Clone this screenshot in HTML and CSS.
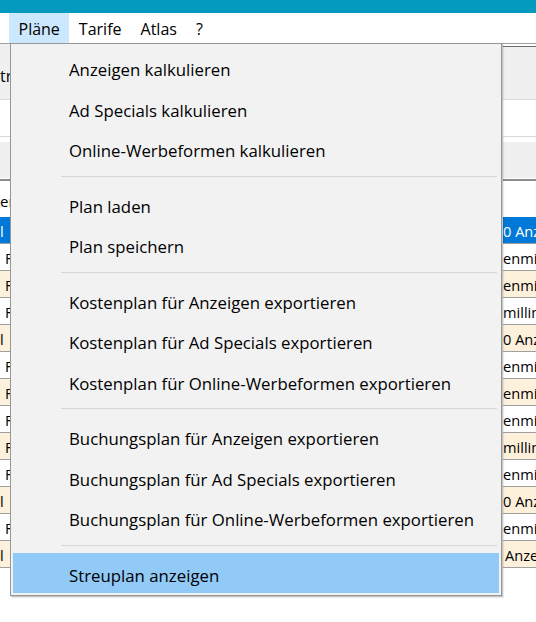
FILE: index.html
```html
<!DOCTYPE html>
<html lang="de">
<head>
<meta charset="utf-8">
<title>Pläne</title>
<link rel="stylesheet" href="styles.css">
</head>
<body>
<div class="app">
  <div class="titlebar"></div>
  <nav class="menubar">
    <span class="mi active">Pläne</span>
    <span class="mi">Tarife</span>
    <span class="mi">Atlas</span>
    <span class="mi">?</span>
  </nav>
  <div class="toolbar">
    <div class="tb-left"><span class="tb-label">tr</span></div>
    <div class="tb-right"></div>
  </div>
  <div class="filter"></div>
  <div class="colhead"><div class="colhead-fill"></div></div>
  <div class="label">er</div>
  <div class="rows">
    <div class="row sel"><span class="c-left flush">l</span><span class="c-right">0 Anzeigen</span></div>
    <div class="row"><span class="c-left">F</span><span class="c-right">enmillimeter</span></div>
    <div class="row cream"><span class="c-left">F</span><span class="c-right">enmillimeter</span></div>
    <div class="row"><span class="c-left">F</span><span class="c-right">millimeter</span></div>
    <div class="row cream"><span class="c-left flush">l</span><span class="c-right">0 Anzeigen</span></div>
    <div class="row"><span class="c-left">F</span><span class="c-right">enmillimeter</span></div>
    <div class="row cream"><span class="c-left">F</span><span class="c-right">enmillimeter</span></div>
    <div class="row"><span class="c-left">F</span><span class="c-right">enmillimeter</span></div>
    <div class="row cream"><span class="c-left">F</span><span class="c-right">millimeter</span></div>
    <div class="row"><span class="c-left">F</span><span class="c-right">enmillimeter</span></div>
    <div class="row cream"><span class="c-left flush">l</span><span class="c-right">0 Anzeigen</span></div>
    <div class="row"><span class="c-left">F</span><span class="c-right">enmillimeter</span></div>
    <div class="row cream"><span class="c-left flush">l</span><span class="c-right gap">Anzeigen</span></div>
  </div>

  <div class="menu">
    <div class="item">Anzeigen kalkulieren</div>
    <div class="item">Ad Specials kalkulieren</div>
    <div class="item">Online-Werbeformen kalkulieren</div>
    <div class="sep"></div>
    <div class="item">Plan laden</div>
    <div class="item">Plan speichern</div>
    <div class="sep"></div>
    <div class="item">Kostenplan für Anzeigen exportieren</div>
    <div class="item">Kostenplan für Ad Specials exportieren</div>
    <div class="item">Kostenplan für Online-Werbeformen exportieren</div>
    <div class="sep"></div>
    <div class="item">Buchungsplan für Anzeigen exportieren</div>
    <div class="item">Buchungsplan für Ad Specials exportieren</div>
    <div class="item">Buchungsplan für Online-Werbeformen exportieren</div>
    <div class="sep"></div>
    <div class="item hover">Streuplan anzeigen</div>
  </div>
</div>
</body>
</html>
```
FILE: styles.css
```css
html, body {
  margin: 0;
  padding: 0;
  background: #ffffff;
}
body {
  font-family: "Open Sans", "Noto Sans", sans-serif;
  color: #000000;
}
.app {
  position: relative;
  width: 536px;
  height: 622px;
  overflow: hidden;
  background: #ffffff;
}
.titlebar {
  height: 13px;
  background: #039abd;
}
.menubar {
  display: flex;
  height: 30px;
  padding-left: 9px;
  font-size: 16px;
}
.mi {
  padding: 2px 9.5px 0;
  line-height: 28px;
  white-space: nowrap;
}
.mi.active {
  background: #cce8ff;
}
.toolbar {
  display: flex;
  height: 56px;
  box-sizing: border-box;
  border-top: 1px solid #a0a0a0;
}
.tb-left {
  flex: 1;
  background: #f0f0f0;
  font-size: 16px;
  line-height: 22px;
  padding-top: 21px;
  box-sizing: border-box;
}
.tb-right {
  width: 34px;
  margin-top: 2px;
  border-top: 1px solid #6e6e6e;
  background: #f0f0f0;
}
.filter {
  height: 36px;
  border-top: 1px solid #dadada;
  border-bottom: 1px solid #dadada;
}
.colhead {
  padding: 5px 0 1px;
  border-bottom: 2px solid #8c8c8c;
}
.colhead-fill {
  height: 36px;
  background: #f0f0f0;
}
.label {
  height: 36px;
  box-sizing: border-box;
  padding-top: 3px;
  line-height: 34px;
  font-size: 15px;
}
.row {
  display: flex;
  height: 27px;
  box-sizing: border-box;
  border-bottom: 1px solid #a0a0a0;
  padding-top: 2px;
  font-size: 14.6px;
  line-height: 24px;
}
.row.sel {
  background: #0078d7;
  color: #ffffff;
}
.row.cream {
  background: #fef1dc;
}
.c-left {
  width: 502px;
  flex: none;
  box-sizing: border-box;
  padding-left: 5px;
  overflow: hidden;
}
.c-left.flush {
  padding-left: 0;
}
.c-right {
  flex: 1;
  white-space: nowrap;
  overflow: hidden;
  padding-left: 1px;
}
.c-right.gap {
  padding-left: 3px;
}
.menu {
  position: absolute;
  top: 43px;
  left: 10px;
  width: 492px;
  box-sizing: border-box;
  border: 1px solid #979797;
  background: #f2f2f2;
  padding: 3px 2px 2px;
  box-shadow: 1px 1px 0 #c4c4c4, 2px 2px 1px rgba(0, 0, 0, 0.08);
  font-size: 16.8px;
}
.item {
  height: 40.5px;
  box-sizing: border-box;
  padding: 6px 0 0 56px;
  line-height: 34.5px;
  white-space: nowrap;
}
.item.hover {
  background: #91c9f7;
}
.sep {
  height: 15px;
  box-sizing: border-box;
  padding-top: 7px;
}
.sep::before {
  content: "";
  display: block;
  height: 1px;
  background: #d7d7d7;
  margin: 0 2px 0 48px;
}
```
